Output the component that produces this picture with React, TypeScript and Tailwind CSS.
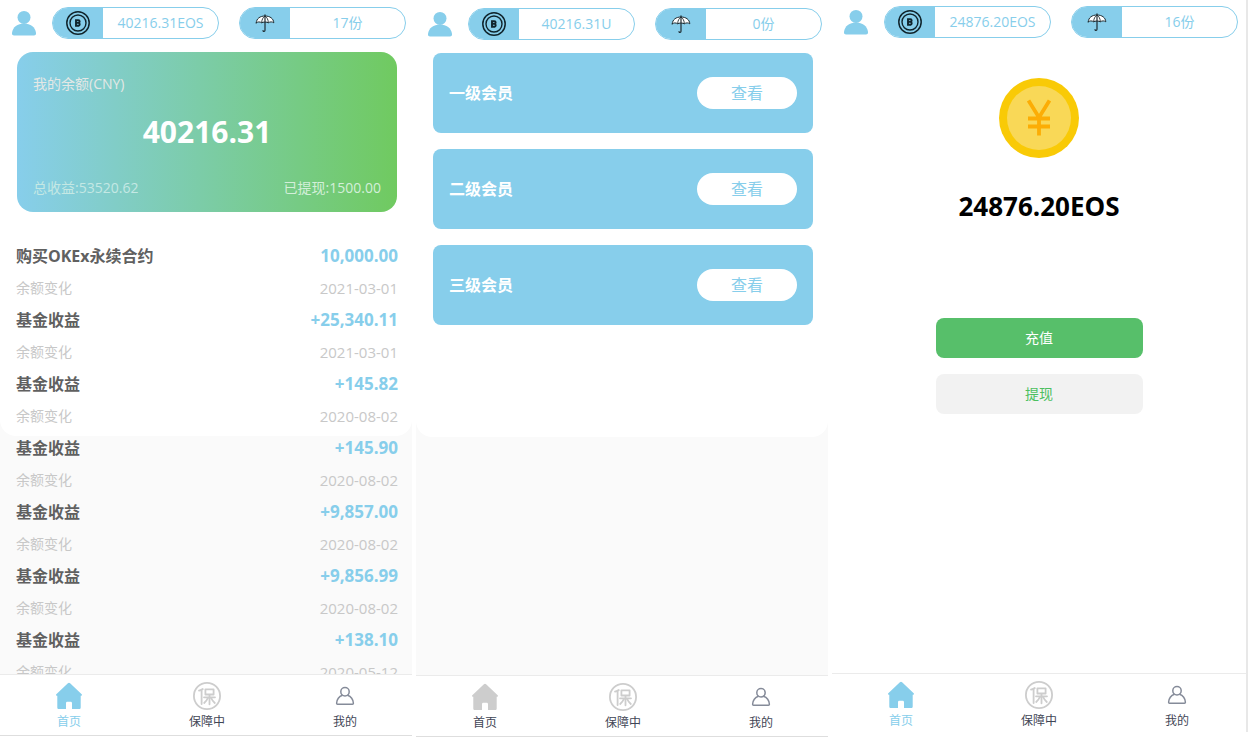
import type { ReactNode } from "react";

interface Entry {
  title: string;
  amount: string;
  date: string;
}

const entries: Entry[] = [
  { title: "购买OKEx永续合约", amount: "10,000.00", date: "2021-03-01" },
  { title: "基金收益", amount: "+25,340.11", date: "2021-03-01" },
  { title: "基金收益", amount: "+145.82", date: "2020-08-02" },
  { title: "基金收益", amount: "+145.90", date: "2020-08-02" },
  { title: "基金收益", amount: "+9,857.00", date: "2020-08-02" },
  { title: "基金收益", amount: "+9,856.99", date: "2020-08-02" },
  { title: "基金收益", amount: "+138.10", date: "2020-05-12" },
];

const levels = ["一级会员", "二级会员", "三级会员"];

function UserIcon() {
  return (
    <svg viewBox="0 0 24 26" className="w-6 h-[26px] shrink-0" fill="#87ceeb">
      <circle cx="12" cy="7.4" r="6.5" />
      <path d="M0 23C0.8 17 5.500 13.500 12 13.500s11.200 3.500 12 9.500C24.100 24.800 23.300 25.500 22 25.500H2C0.700 25.500-0.100 24.800 0 23Z" />
    </svg>
  );
}

function CoinIcon() {
  return (
    <svg viewBox="0 0 24 24" className="w-6 h-6" fill="none" stroke="#10242c">
      <circle cx="12" cy="12" r="11.2" strokeWidth="1.5" />
      <circle cx="12" cy="12" r="8" strokeWidth="1.4" />
      <path d="M10 9.200v5.600h2.600a1.500 1.500 0 0 0 0-2.900H10h2.300a1.350 1.350 0 0 0 0-2.700Z" strokeWidth="1.900" />
    </svg>
  );
}

function UmbrellaIcon() {
  return (
    <svg viewBox="0 0 20 20" className="w-5 h-5" fill="none" stroke="#1d2b31" strokeLinecap="round">
      <path d="M1.200 9.800C1.500 5.500 5 3 10 3S18.500 5.500 18.800 9.800C17.500 8.600 15 8.600 13.300 9.800C12.300 8.800 7.700 8.800 6.700 9.800C5 8.600 2.500 8.600 1.200 9.800Z" fill="#fff" strokeWidth="1" />
      <path d="M6.700 9.500C6.700 6.500 8 4.500 10 3C12 4.500 13.300 6.500 13.300 9.500" strokeWidth="0.900" />
      <path d="M10 1.800V17.200c0 1.500-2 1.500-2 0.300" strokeWidth="1.200" />
    </svg>
  );
}

function HomeIcon({ color }: { color: string }) {
  return (
    <svg viewBox="0 0 28 28" className="w-7 h-7" fill={color}>
      <path d="M12.900 1.300a1.600 1.600 0 0 1 2.200 0L26.700 12.300c.6.700.3 1.400-.5 1.400H25.700V25.400c0 1.100-.6 1.700-1.700 1.700H17v-5.800c0-1-.5-1.500-1.400-1.500h-3.200c-.9 0-1.400.5-1.400 1.500v5.800H4c-1.100 0-1.700-.6-1.700-1.700V13.700H1.800c-.8 0-1.100-.7-.5-1.400Z" />
    </svg>
  );
}

function GuardIcon() {
  return (
    <svg viewBox="0 0 28 28" className="w-7 h-7" fill="none" stroke="#cdcdcd" strokeLinecap="round" strokeLinejoin="round">
      <circle cx="14" cy="14" r="13.100" strokeWidth="1.800" />
      <path d="M9.800 7Q8.500 8.200 6 8.600M8.600 8.600V22M12.400 7.300h8.200v5.200h-8.200ZM16.500 12.500V22.300M11 15.300h11M14.600 16.500Q13.500 19 11.200 21M18.400 16.500Q19.500 19 21.800 21" strokeWidth="1.800" />
    </svg>
  );
}

function MineIcon() {
  return (
    <svg viewBox="0 0 28 28" className="w-7 h-7" fill="none" stroke="#858b99" strokeWidth="1.500">
      <circle cx="14" cy="9.700" r="4.200" />
      <path d="M11.500 13.300C8 14.500 5.900 17.300 5.600 21.300c0 .7.300 1 .9 1h15c.6 0 .9-.3.9-1C22.100 17.300 20 14.500 16.500 13.300" />
    </svg>
  );
}

function Pill({ icon, children }: { icon: ReactNode; children: ReactNode }) {
  return (
    <div className="flex flex-1 h-8 rounded-full border border-[#87ceeb] overflow-hidden">
      <div className="w-[50px] flex items-center justify-center bg-[#87ceeb]">{icon}</div>
      <div className="flex-1 flex items-center justify-center text-sm text-[#87ceeb]">{children}</div>
    </div>
  );
}

function Header({ balance, count }: { balance: string; count: string }) {
  return (
    <header className="flex items-center pt-1.5 pb-[13px] pl-3 pr-2">
      <UserIcon />
      <div className="flex flex-1 gap-5 ml-4">
        <Pill icon={<CoinIcon />}>{balance}</Pill>
        <Pill icon={<UmbrellaIcon />}>{count}</Pill>
      </div>
    </header>
  );
}

function NavItem({ icon, label, active }: { icon: ReactNode; label: string; active?: boolean }) {
  return (
    <a href="#" className="flex flex-1 flex-col items-center gap-0.5">
      {icon}
      <span className={active ? "text-xs leading-5 text-[#87ceeb]" : "text-xs leading-5 text-[#3f4656]"}>{label}</span>
    </a>
  );
}

function TabBar({ homeActive, className }: { homeActive?: boolean; className: string }) {
  return (
    <nav className={`flex shrink-0 bg-white border-t border-t-[#ebebeb] pt-[7px] ${className}`}>
      <NavItem icon={<HomeIcon color={homeActive ? "#87ceeb" : "#cdcdcd"} />} label="首页" active={homeActive} />
      <NavItem icon={<GuardIcon />} label="保障中" />
      <NavItem icon={<MineIcon />} label="我的" />
    </nav>
  );
}

function WalletScreen() {
  return (
    <section className="h-full pb-0.5 mr-1 overflow-hidden">
      <div className="h-full flex flex-col -mr-0.5 bg-[#fafafa]">
        <div className="flex-1 min-h-0 overflow-hidden">
          <div className="h-[436px] pt-px bg-white rounded-b-2xl mr-0.5">
            <div className="-mr-0.5">
              <Header balance="40216.31EOS" count="17份" />
              <div className="mx-[17px] px-4 pt-4 pb-2 rounded-2xl bg-linear-to-r/srgb from-[#87ceeb] to-[#70ca60] text-sm leading-8">
                <p className="text-[#e4e8e6]">我的余额(CNY)</p>
                <p className="mt-4 text-center text-[30px] leading-8 font-bold text-white">40216.31</p>
                <div className="mt-6 flex justify-between">
                  <span className="text-[#c4e8e4]">总收益:53520.62</span>
                  <span className="text-[#d3efd9]">已提现:1500.00</span>
                </div>
              </div>
              <ul className="mt-7 px-4">
                {entries.map((entry, i) => (
                  <li key={i}>
                    <div className="flex justify-between leading-8 font-bold">
                      <span className="text-base leading-8 text-[#606060]">{entry.title}</span>
                      <span className="text-[17px] text-[#87ceeb]">{entry.amount}</span>
                    </div>
                    <div className="flex justify-between leading-8 text-[#c8c8c8]">
                      <span className="text-sm leading-8">余额变化</span>
                      <span className="text-[15px]">{entry.date}</span>
                    </div>
                  </li>
                ))}
              </ul>
            </div>
          </div>
        </div>
        <TabBar homeActive className="pb-[3px] border-b border-b-[#dedede]" />
      </div>
    </section>
  );
}

function MemberScreen() {
  return (
    <section className="h-full pb-px mr-1 overflow-hidden">
      <div className="h-full flex flex-col -mr-0.5 bg-[#fafafa]">
        <div className="flex-1 min-h-0 overflow-hidden">
          <div className="h-[437px] pt-0.5 bg-white rounded-b-2xl mr-0.5">
            <div className="-mr-0.5">
              <Header balance="40216.31U" count="0份" />
              <div className="mx-[17px] flex flex-col gap-4">
                {levels.map((level) => (
                  <div key={level} className="flex items-center justify-between h-20 px-4 rounded-lg bg-[#87ceeb]">
                    <span className="font-bold text-white">{level}</span>
                    <button className="w-[100px] h-8 rounded-full bg-white text-[#87ceeb]">查看</button>
                  </div>
                ))}
              </div>
            </div>
          </div>
        </div>
        <TabBar className="pb-[3px] border-b border-b-[#dedede]" />
      </div>
    </section>
  );
}

function RechargeScreen() {
  return (
    <section className="h-full pb-1.5">
      <div className="h-full flex flex-col border-r-2 border-[#e8e8e8] bg-white">
        <div className="flex-1 min-h-0 overflow-hidden">
          <Header balance="24876.20EOS" count="16份" />
          <div className="flex flex-col items-center mt-[27px]">
            <svg viewBox="0 0 80 80" className="w-20 h-20">
              <circle cx="40" cy="40" r="40" fill="#f9ca06" />
              <circle cx="40" cy="40" r="32" fill="#f9d857" />
              <path d="M29.500 22.500L40 39.500L50.500 22.500M40 39V57.500M29 40.500H51M29 48.500H51" fill="none" stroke="#fcad05" strokeWidth="3.800" />
            </svg>
            <h2 className="mt-6 text-[26px] leading-[48px] font-bold text-black">24876.20EOS</h2>
            <div className="w-1/2 mt-[88px] flex flex-col gap-4 text-sm">
              <button className="h-10 rounded-lg bg-[#57bf6a] text-white">充值</button>
              <button className="h-10 rounded-lg bg-[#f2f2f2] text-[#4cc05f]">提现</button>
            </div>
          </div>
        </div>
        <TabBar homeActive className="pb-px" />
      </div>
    </section>
  );
}

export default function App() {
  return (
    <main className="grid grid-cols-3 h-screen bg-white font-['Open_Sans','Noto_Sans_CJK_SC',sans-serif]">
      <WalletScreen />
      <MemberScreen />
      <RechargeScreen />
    </main>
  );
}
